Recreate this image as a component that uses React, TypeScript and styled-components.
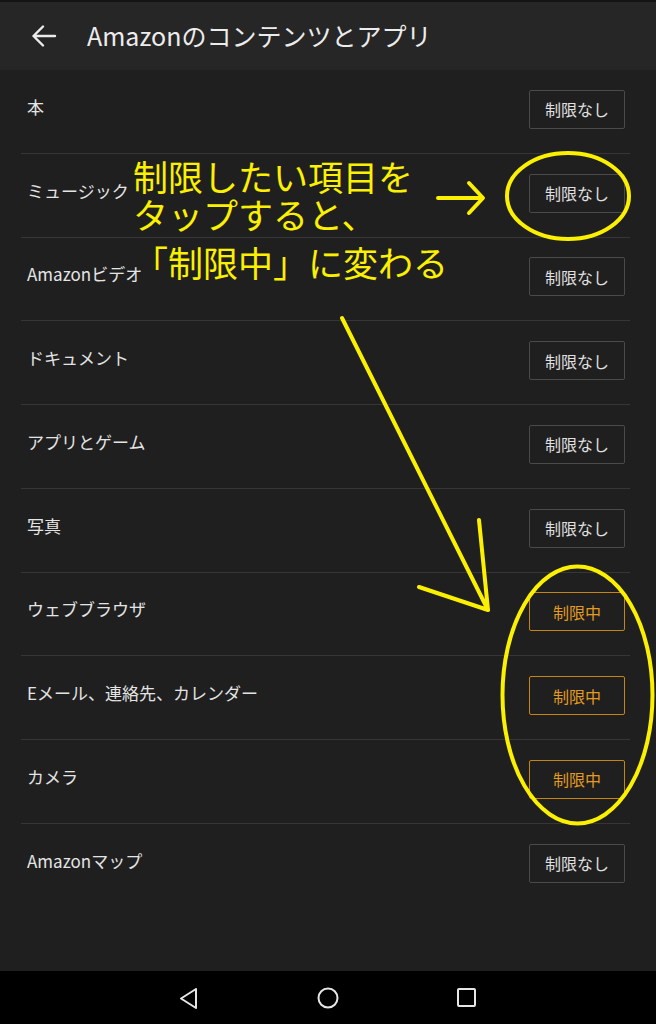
import * as React from "react";
import styled, { createGlobalStyle } from "styled-components";

const GlobalStyle = createGlobalStyle`
  html, body {
    margin: 0;
    padding: 0;
    background: #1f1f1f;
  }
  body {
    font-family: "Noto Sans CJK JP", "Noto Sans", sans-serif;
  }
`;

type Item = { label: string; restricted?: boolean };

const items: Item[] = [
  { label: "本" },
  { label: "ミュージック" },
  { label: "Amazonビデオ" },
  { label: "ドキュメント" },
  { label: "アプリとゲーム" },
  { label: "写真" },
  { label: "ウェブブラウザ", restricted: true },
  { label: "Eメール、連絡先、カレンダー", restricted: true },
  { label: "カメラ", restricted: true },
  { label: "Amazonマップ" },
];

const YELLOW = "#fbf000";

export default function App() {
  return (
    <>
      <GlobalStyle />
      <Screen>
        <Header>
          <BackButton aria-label="戻る">
            <svg width="26" height="24" viewBox="0 0 26 24">
              <path
                d="M24 12H2.5M12 2.5L2.5 12L12 21.5"
                fill="none"
                stroke="#ececec"
                strokeWidth="2.4"
                strokeLinecap="round"
                strokeLinejoin="round"
              />
            </svg>
          </BackButton>
          <Title>Amazonのコンテンツとアプリ</Title>
        </Header>

        <Content>
          <List>
            {items.map((item) => (
              <Row key={item.label}>
                <Label>{item.label}</Label>
                <StatusButton $restricted={!!item.restricted}>
                  {item.restricted ? "制限中" : "制限なし"}
                </StatusButton>
              </Row>
            ))}
          </List>
        </Content>

        <NavBar>
          <svg width="22" height="24" viewBox="0 0 22 24">
            <path d="M18 3L3 12.5L18 22Z" fill="none" stroke="#e6e6e6" strokeWidth="2" strokeLinejoin="round" />
          </svg>
          <svg width="24" height="24" viewBox="0 0 24 24">
            <circle cx="12" cy="12" r="9.5" fill="none" stroke="#e6e6e6" strokeWidth="2" />
          </svg>
          <svg width="22" height="22" viewBox="0 0 22 22">
            <rect x="2" y="2" width="17" height="17" rx="1" fill="none" stroke="#e6e6e6" strokeWidth="2" />
          </svg>
        </NavBar>

        <Note>
          <NoteLine>制限したい項目を</NoteLine>
          <NoteLine>タップすると、</NoteLine>
          <NoteLine $gap>「制限中」に変わる</NoteLine>
        </Note>

        <Marks viewBox="0 0 656 1024" width="656" height="1024">
          <g fill="none" stroke={YELLOW} strokeWidth="4" strokeLinecap="round" strokeLinejoin="round">
            <path d="M438 198H482M469 183L483 198L469 213" />
            <ellipse cx="568" cy="196" rx="61" ry="43" />
            <path d="M342 318L488 610M419 587L488 610L479 520" />
            <ellipse cx="577.5" cy="695" rx="75" ry="128.5" />
          </g>
        </Marks>
      </Screen>
    </>
  );
}

const Screen = styled.div`
  position: relative;
  width: 656px;
  height: 1024px;
  display: flex;
  flex-direction: column;
  background: #1f1f1f;
  overflow: hidden;
`;

const Header = styled.header`
  height: 68px;
  border-top: 2px solid #141414;
  background: #262626;
  display: flex;
  align-items: center;
  padding-left: 31px;
  gap: 30px;
`;

const BackButton = styled.div`
  display: flex;
  align-items: center;
  width: 26px;
  height: 24px;
`;

const Title = styled.h1`
  margin: 0;
  font-size: 25px;
  font-weight: 400;
  color: #ececec;
  padding-bottom: 2px;
`;

const Content = styled.main`
  flex: 1;
  padding: 0 26px 0 21px;
`;

const List = styled.ul`
  list-style: none;
  margin: 0;
  padding: 0;
`;

const Row = styled.li`
  height: 78.75px;
  display: flex;
  align-items: center;
  justify-content: space-between;
  padding: 0 5px 4px 6px;
  box-sizing: content-box;
  border-bottom: 1px solid #363636;
  &:last-child {
    border-bottom: none;
  }
`;

const Label = styled.span`
  font-size: 17px;
  color: #e4e4e4;
  padding-bottom: 6px;
`;

const StatusButton = styled.button<{ $restricted: boolean }>`
  width: 96px;
  height: 39px;
  box-sizing: border-box;
  background: transparent;
  border: 1.5px solid ${(p) => (p.$restricted ? "#c7850e" : "#4a4a4a")};
  border-radius: 2px;
  color: ${(p) => (p.$restricted ? "#e39b1f" : "#e0e0e0")};
  font-family: "Noto Sans CJK JP", "Noto Sans", sans-serif;
  font-size: 16px;
  padding: 0;
`;

const NavBar = styled.nav`
  height: 53px;
  background: #000;
  display: flex;
  align-items: center;
  justify-content: center;
  gap: 116px;
`;

const Note = styled.div`
  position: absolute;
  left: 133px;
  top: 157px;
  color: ${YELLOW};
  font-size: 35px;
  line-height: 38px;
  pointer-events: none;
`;

const NoteLine = styled.div<{ $gap?: boolean }>`
  white-space: nowrap;
  margin-top: ${(p) => (p.$gap ? "10px" : "0")};
`;

const Marks = styled.svg`
  position: absolute;
  left: 0;
  top: 0;
  pointer-events: none;
`;
